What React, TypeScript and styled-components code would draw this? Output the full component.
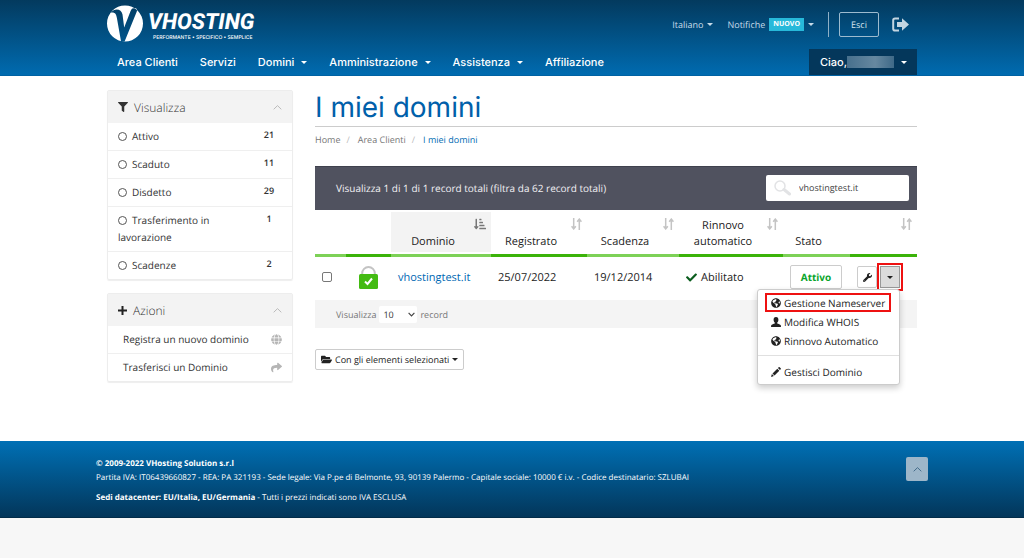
import React from "react";
import styled, { createGlobalStyle } from "styled-components";
import {
  FaCheck,
  FaFilter,
  FaFolderOpen,
  FaGlobe,
  FaGlobeAmericas,
  FaShare,
  FaSortAmountDownAlt,
  FaWrench,
} from "react-icons/fa";

const GlobalStyle = createGlobalStyle`
  * { box-sizing: border-box; }
  body {
    margin: 0;
    background: #f7f7f7;
    font-family: "Open Sans", "Noto Sans", sans-serif;
    font-size: 10px;
    color: #333;
    text-rendering: geometricPrecision;
  }
  a { color: inherit; text-decoration: none; }
  button, input, select { font-family: inherit; margin: 0; text-rendering: inherit; }
  button { cursor: pointer; }
  h1, h2, p, ul, ol { margin: 0; padding: 0; }
  ul, ol { list-style: none; }
  svg { display: block; flex: none; }
`;

const Container = styled.div`
  max-width: 810px;
  margin: 0 auto;
`;

/* ---------- header ---------- */

const Header = styled.header`
  background: linear-gradient(#033a5e, #006bb0);
  border-bottom: 1px solid #0062a3;
  color: #fff;
`;

const TopRow = styled.div`
  display: flex;
  justify-content: space-between;
  height: 49px;
`;

const Brand = styled.a`
  display: flex;
  align-items: flex-start;
  gap: 5px;
  padding-top: 5px;
`;

const BrandText = styled.span`
  display: flex;
  flex-direction: column;
  padding-top: 7px;
`;

const BrandName = styled.span`
  font: italic 800 22px/22px Roboto, sans-serif;
`;

const BrandTag = styled.span`
  font: 500 5px/8px Inter, sans-serif;
  padding-left: 5px;
`;

const Utilities = styled.div`
  display: flex;
  align-items: center;
  height: 49px;
  font-size: 9px;
  color: #c6dbe9;
`;

const UtilityButton = styled.button`
  display: flex;
  align-items: center;
  gap: 4px;
  margin-right: 14px;
  padding: 0;
  border: 0;
  background: none;
  color: inherit;
  font-size: 9px;
`;

const Badge = styled.span`
  padding: 0 4px;
  background: #27b9da;
  color: #fff;
  font: 700 7px/13px "Open Sans", sans-serif;
`;

const Separator = styled.span`
  width: 1px;
  height: 25px;
  margin-right: 10px;
  background: #8fb0c6;
`;

const ExitButton = styled.button`
  width: 40px;
  height: 25px;
  margin-right: 13px;
  border: 1px solid #9dbbcf;
  border-radius: 2px;
  background: none;
  color: #d5e4ee;
  font-size: 9px;
`;

const IconLink = styled.a`
  margin-right: 8px;
`;

const Caret = styled.span`
  width: 0;
  height: 0;
  border: 3px solid transparent;
  border-top-color: currentColor;
  border-bottom: 0;
`;

const NavRow = styled.nav`
  display: flex;
  justify-content: space-between;
  height: 26px;
  font: 500 11px/26px Inter, sans-serif;
`;

const NavList = styled.ul`
  display: flex;
  gap: 22px;
  padding-left: 10px;
`;

const NavLink = styled.a`
  display: flex;
  align-items: center;
  gap: 7px;
`;

const AccountButton = styled.button`
  display: flex;
  align-items: center;
  width: 108px;
  padding: 0 10px 0 11px;
  border: 0;
  background: #04375b;
  color: #fff;
  font: 500 11px/26px Inter, sans-serif;
`;

const HiddenName = styled.span`
  flex: 1;
  height: 12px;
  margin-right: 7px;
  background: linear-gradient(90deg, #47708d, #6688a0 60%, #3f6987);
`;

/* ---------- page ---------- */

const PageBody = styled.div`
  padding-bottom: 59px;
  background: #fff;
`;

const Columns = styled(Container)`
  display: grid;
  grid-template-columns: 186px minmax(0, 1fr);
  gap: 22px;
  padding-top: 14px;
`;

const Sidebar = styled.aside`
  display: flex;
  flex-direction: column;
  gap: 13px;
`;

const Panel = styled.section`
  border: 1px solid #ededed;
  border-radius: 2px;
  box-shadow: 0 1px 1px #eee;
`;

const PanelHeading = styled.h2`
  display: flex;
  align-items: center;
  gap: 6px;
  height: 32px;
  padding: 0 10px;
  background: #f3f3f3;
  font-size: 12px;
  font-weight: 300;
  color: #333;

  svg:last-child { color: #bbb; }
`;

const PanelTitle = styled.span`
  flex: 1;
`;

const PanelRow = styled.li`
  display: flex;
  justify-content: space-between;
  padding: 5px 10px;
  line-height: 17px;

  & + & { border-top: 1px solid #efefef; }
`;

const FilterLabel = styled.label`
  width: 124px;
`;

const Radio = styled.input`
  appearance: none;
  width: 9px;
  height: 9px;
  margin: 0 5px 0 0;
  border: 1px solid #555;
  border-radius: 50%;
  vertical-align: -1px;
`;

const Count = styled.span`
  width: 26px;
  font-size: 9px;
  font-weight: 600;
  line-height: 14px;
  text-align: center;
`;

const ActionLink = styled.a`
  display: flex;
  flex: 1;
  align-items: center;
  justify-content: space-between;
  padding-left: 5px;
  color: #333;

  svg { color: #b5b5b5; }
`;

const PageTitle = styled.h1`
  padding-bottom: 1px;
  border-bottom: 1px solid #ccc;
  color: #0060aa;
  font: 400 28px/35px Inter, sans-serif;
`;

const Breadcrumb = styled.ol`
  display: flex;
  padding-top: 6px;
  font-size: 9px;
  line-height: 13px;
  color: #777;

  li + li::before {
    content: "/";
    padding: 0 8px 0 6px;
    color: #bbb;
  }
`;

const Current = styled.li`
  color: #006bb3;
`;

const TableBar = styled.div`
  display: flex;
  align-items: center;
  justify-content: space-between;
  height: 44px;
  margin-top: 20px;
  padding: 0 8px 2px 21px;
  background: #50525f;
  border-top: 1px solid #3f414d;
  color: #f0f0f3;
`;

const SearchBox = styled.label`
  display: flex;
  align-items: center;
  gap: 8px;
  width: 143px;
  height: 26px;
  padding: 0 8px;
  border-radius: 2px;
  background: #fff;
`;

const SearchInput = styled.input`
  flex: 1;
  min-width: 0;
  padding: 0;
  border: 0;
  outline: 0;
  background: none;
  color: #444;
  font-size: 9px;
`;

const DomainTable = styled.table`
  width: 100%;
  table-layout: fixed;
  border-collapse: separate;
  border-spacing: 0;
  font-size: 11px;
  color: #222;
`;

const HeadCell = styled.th<{ $dark?: boolean }>`
  padding: 2px 0;
  border-bottom: 3px solid ${(p) => (p.$dark ? "#3bb309" : "#7dd157")};
  font-weight: 400;
`;

const HeadContent = styled.div<{ $sorted?: boolean }>`
  display: grid;
  grid-template-columns: 1fr 16px;
  height: 40px;
  padding: 6px 5px 2px 0;
  background: ${(p) => (p.$sorted ? "#f3f3f3" : "transparent")};

  svg { justify-self: end; }
`;

const HeadLabel = styled.span`
  align-self: end;
  padding-left: 5px;
  line-height: 16px;
  text-align: center;
`;

const BodyCell = styled.td`
  height: 43px;
  padding: 0 7px 3px;
  white-space: nowrap;
`;

const DomainLink = styled.a`
  color: #0068b3;
`;

const CheckBox = styled.input`
  appearance: none;
  display: block;
  width: 10px;
  height: 10px;
  border: 1px solid #777;
  border-radius: 2px;
`;

const Inline = styled.span<{ $center?: boolean }>`
  display: flex;
  align-items: center;
  justify-content: ${(p) => (p.$center ? "center" : "flex-start")};
  gap: 4px;
`;

const StatusButton = styled.button`
  width: 52px;
  height: 24px;
  padding: 0;
  border: 1px solid #ccc;
  border-radius: 2px;
  background: #fff;
  color: #0aa52c;
  font-size: 10px;
  font-weight: 700;
`;

const ActionGroup = styled.div`
  position: relative;
  display: flex;
  gap: 3px;
`;

const SquareButton = styled.button<{ $open?: boolean }>`
  display: flex;
  align-items: center;
  justify-content: center;
  width: 20px;
  height: 22px;
  padding: 0;
  border: 1px solid ${(p) => (p.$open ? "#999" : "#ccc")};
  border-radius: ${(p) => (p.$open ? "0" : "2px")};
  background: ${(p) => (p.$open ? "#dcdcdc" : "#fff")};
  outline: ${(p) => (p.$open ? "2px solid #ee1111" : "none")};
  outline-offset: 1px;
  color: #222;
`;

const Menu = styled.ul`
  position: absolute;
  top: 23px;
  right: 10px;
  z-index: 2;
  width: 143px;
  padding: 3px 7px;
  border: 1px solid #ccc;
  border-radius: 3px;
  background: #fff;
  box-shadow: 0 3px 6px rgba(0, 0, 0, 0.2);
  font-size: 10px;
`;

const MenuLink = styled.a<{ $marked?: boolean }>`
  display: flex;
  align-items: center;
  gap: 3px;
  width: 126px;
  height: 19px;
  padding: 0 4px;
  border: 2px solid ${(p) => (p.$marked ? "#ee1111" : "transparent")};
  color: #222;
`;

const MenuDivider = styled.li`
  height: 1px;
  margin: 5px -7px 6px;
  background: #e0e0e0;
`;

const TableFoot = styled.div`
  display: flex;
  align-items: center;
  gap: 3px;
  height: 28px;
  padding: 0 21px;
  background: #f4f4f4;
  color: #777;
  font-size: 9px;
`;

const SelectBox = styled.span`
  display: grid;
  align-items: center;

  > * { grid-area: 1 / 1; }
  svg { justify-self: end; margin-right: 2px; pointer-events: none; }
`;

const LengthSelect = styled.select`
  appearance: none;
  width: 38px;
  height: 17px;
  padding: 0 4px;
  border: 0;
  border-radius: 2px;
  background: #fff;
  color: #333;
  font-size: 9px;
`;

const BulkButton = styled.button`
  display: flex;
  align-items: center;
  gap: 3px;
  height: 21px;
  margin-top: 21px;
  padding: 0 5px;
  border: 1px solid #ccc;
  border-radius: 2px;
  background: #fff;
  color: #222;
  font-size: 9px;
`;

/* ---------- footer ---------- */

const Footer = styled.footer`
  background: linear-gradient(#0070b5, #03365a);
  border-bottom: 1px solid #022c49;
  color: #fff;
`;

const FooterInner = styled.div`
  display: flex;
  justify-content: space-between;
  align-items: flex-start;
  max-width: 832px;
  margin: 0 auto;
  padding: 16px 0 12px;
  font-size: 8px;
  line-height: 14px;
`;

const FooterText = styled.div`
  p + p + p { padding-top: 6px; }
`;

const TopLink = styled.a`
  display: flex;
  align-items: center;
  justify-content: center;
  width: 22px;
  height: 24px;
  border-radius: 2px;
  background: #9db6c9;
  color: #456d8b;
`;

/* ---------- drawings ---------- */

const LogoMark = () => (
  <svg width="36" height="37" viewBox="0 0 36 37" aria-hidden="true">
    <path
      fill="#fff"
      fillRule="evenodd"
      d="M18 .5A18 18 0 1 1 18 36.500 18 18 0 0 1 18 .5ZM3.800 7.500C8.500 7 9.200 9.200 9.900 13L14 36.200H17.700L29.800 6.500C30.600 4.300 29.500 3 27.500 3 25.300 3 24.300 4 23.400 6.500L17.200 22.500 15.500 9.500C14.700 4 8 2.500 3.800 7.500Z"
    />
  </svg>
);

const LogoutIcon = () => (
  <svg width="17" height="15" viewBox="0 0 17 15" aria-hidden="true">
    <path d="M7 1.500H3Q1.200 1.500 1.200 3.300V11.700Q1.200 13.500 3 13.500H7" fill="none" stroke="#c3d5e1" strokeWidth="2" />
    <path d="M5 5H10V1.300L17 7.500 10 13.700V10H5Z" fill="#c3d5e1" />
  </svg>
);

const ChevronUp = () => (
  <svg width="9" height="9" viewBox="0 0 9 9" fill="none" stroke="currentColor" aria-hidden="true">
    <path d="M.7 6.300 4.500 2.600 8.300 6.300" />
  </svg>
);

const ChevronDown = () => (
  <svg width="7" height="5" viewBox="0 0 7 5" fill="none" stroke="#444" strokeWidth="1.200" aria-hidden="true">
    <path d="M.6.900 3.500 3.800 6.400.900" />
  </svg>
);

const PlusIcon = () => (
  <svg width="9" height="9" viewBox="0 0 9 9" stroke="#222" strokeWidth="2" aria-hidden="true">
    <path d="M4.500 0V9M0 4.500H9" />
  </svg>
);

const SortIcon = () => (
  <svg width="11" height="12" viewBox="0 0 11 12" fill="none" stroke="#c4c4c4" strokeWidth="1.500" aria-hidden="true">
    <path d="M2.700 0V10.500M.6 8.200 2.700 10.900 4.800 8.200M8.300 12V1.500M6.200 3.800 8.300 1.100 10.400 3.800" />
  </svg>
);

const SearchIcon = () => (
  <svg width="17" height="16" viewBox="0 0 17 16" fill="none" stroke="#e2e3e5" aria-hidden="true">
    <circle cx="6" cy="6" r="5" strokeWidth="1.500" />
    <path d="M10 9.500 15.500 14" strokeWidth="3" strokeLinecap="round" />
  </svg>
);

const LockIcon = () => (
  <svg width="19" height="23" viewBox="0 0 19 23" aria-hidden="true">
    <path d="M3.200 10V7.300a6.300 6.300 0 0 1 12.600 0V10" fill="none" stroke="#c3c3c3" strokeWidth="2" />
    <rect x="0" y="8" width="19" height="15" rx="1.500" fill="#43bb12" />
    <path d="M6 15.500 8.500 18 13 12.500" fill="none" stroke="#fff" strokeWidth="2" />
  </svg>
);

const UserIcon = () => (
  <svg width="10" height="10" viewBox="0 0 10 10" fill="#222" aria-hidden="true">
    <path d="M5 0C6.700 0 7.500 1.200 7.400 2.900 7.300 4.300 6.700 5.100 6.200 5.600V6.500C7.200 7 9.400 7.300 9.800 8.300L10 10H0L.2 8.300C.6 7.300 2.800 7 3.800 6.500V5.600C3.300 5.100 2.700 4.300 2.600 2.900 2.500 1.200 3.300 0 5 0Z" />
  </svg>
);

const PencilIcon = () => (
  <svg width="10" height="10" viewBox="0 0 10 10" fill="#222" aria-hidden="true">
    <path d="M0 10 .9 7.100 2.900 9.100ZM1.500 6.500 6.300 1.700 8.300 3.700 3.500 8.500ZM6.900 1.100 7.700.3Q8.200-.1 8.700.3L9.700 1.300Q10.100 1.800 9.700 2.300L8.900 3.100Z" />
  </svg>
);

/* ---------- data ---------- */

const navItems = [
  { label: "Area Clienti" },
  { label: "Servizi" },
  { label: "Domini", menu: true },
  { label: "Amministrazione", menu: true },
  { label: "Assistenza", menu: true },
  { label: "Affiliazione" },
];

const filters = [
  ["Attivo", 21],
  ["Scaduto", 11],
  ["Disdetto", 29],
  ["Trasferimento in lavorazione", 1],
  ["Scadenze", 2],
] as const;

const columns = [
  { width: 31 },
  { width: 45 },
  { width: 100, label: "Dominio", sorted: true },
  { width: 96, label: "Registrato", sortable: true },
  { width: 92, label: "Scadenza", sortable: true },
  { width: 104, label: "Rinnovo automatico", sortable: true },
  { width: 67, label: "Stato" },
  { width: 67, sortable: true },
];

export default function App() {
  return (
    <>
      <GlobalStyle />
      <Header>
        <Container>
          <TopRow>
            <Brand href="#">
              <LogoMark />
              <BrandText>
                <BrandName>VHOSTING</BrandName>
                <BrandTag>PERFORMANTE • SPECIFICO • SEMPLICE</BrandTag>
              </BrandText>
            </Brand>
            <Utilities>
              <UtilityButton>
                Italiano <Caret />
              </UtilityButton>
              <UtilityButton>
                Notifiche <Badge>NUOVO</Badge> <Caret />
              </UtilityButton>
              <Separator />
              <ExitButton>Esci</ExitButton>
              <IconLink href="#" aria-label="Esci">
                <LogoutIcon />
              </IconLink>
            </Utilities>
          </TopRow>
          <NavRow>
            <NavList>
              {navItems.map((item) => (
                <li key={item.label}>
                  <NavLink href="#">
                    {item.label}
                    {item.menu && <Caret />}
                  </NavLink>
                </li>
              ))}
            </NavList>
            <AccountButton>
              Ciao,
              <HiddenName />
              <Caret />
            </AccountButton>
          </NavRow>
        </Container>
      </Header>

      <PageBody>
        <Columns>
          <Sidebar>
            <Panel>
              <PanelHeading>
                <FaFilter size={10} />
                <PanelTitle>Visualizza</PanelTitle>
                <ChevronUp />
              </PanelHeading>
              <ul>
                {filters.map(([label, count]) => (
                  <PanelRow key={label}>
                    <FilterLabel>
                      <Radio type="radio" name="status" />
                      {label}
                    </FilterLabel>
                    <Count>{count}</Count>
                  </PanelRow>
                ))}
              </ul>
            </Panel>
            <Panel>
              <PanelHeading>
                <PlusIcon />
                <PanelTitle>Azioni</PanelTitle>
                <ChevronUp />
              </PanelHeading>
              <ul>
                <PanelRow>
                  <ActionLink href="#">
                    Registra un nuovo dominio <FaGlobe size={11} />
                  </ActionLink>
                </PanelRow>
                <PanelRow>
                  <ActionLink href="#">
                    Trasferisci un Dominio <FaShare size={11} />
                  </ActionLink>
                </PanelRow>
              </ul>
            </Panel>
          </Sidebar>

          <main>
            <PageTitle>I miei domini</PageTitle>
            <Breadcrumb>
              <li>
                <a href="#">Home</a>
              </li>
              <li>
                <a href="#">Area Clienti</a>
              </li>
              <Current>I miei domini</Current>
            </Breadcrumb>

            <TableBar>
              <span>Visualizza 1 di 1 di 1 record totali (filtra da 62 record totali)</span>
              <SearchBox>
                <SearchIcon />
                <SearchInput type="text" aria-label="Cerca" defaultValue="vhostingtest.it" />
              </SearchBox>
            </TableBar>

            <DomainTable>
              <colgroup>
                {columns.map((column, i) => (
                  <col key={i} width={column.width} />
                ))}
              </colgroup>
              <thead>
                <tr>
                  {columns.map((column, i) => (
                    <HeadCell key={i} $dark={i % 2 === 1}>
                      <HeadContent $sorted={column.sorted}>
                        <HeadLabel>{column.label}</HeadLabel>
                        {column.sorted && <FaSortAmountDownAlt size={12} color="#777" />}
                        {column.sortable && <SortIcon />}
                      </HeadContent>
                    </HeadCell>
                  ))}
                </tr>
              </thead>
              <tbody>
                <tr>
                  <BodyCell>
                    <CheckBox type="checkbox" aria-label="Seleziona vhostingtest.it" />
                  </BodyCell>
                  <BodyCell>
                    <Inline $center>
                      <LockIcon />
                    </Inline>
                  </BodyCell>
                  <BodyCell>
                    <DomainLink href="#">vhostingtest.it</DomainLink>
                  </BodyCell>
                  <BodyCell>25/07/2022</BodyCell>
                  <BodyCell>19/12/2014</BodyCell>
                  <BodyCell>
                    <Inline>
                      <FaCheck size={11} color="#0b5d1e" />
                      Abilitato
                    </Inline>
                  </BodyCell>
                  <BodyCell>
                    <StatusButton>Attivo</StatusButton>
                  </BodyCell>
                  <BodyCell>
                    <ActionGroup>
                      <SquareButton aria-label="Gestisci">
                        <FaWrench size={9} />
                      </SquareButton>
                      <SquareButton $open aria-label="Altre azioni" aria-expanded="true">
                        <Caret />
                      </SquareButton>
                      <Menu>
                        <li>
                          <MenuLink href="#" $marked>
                            <FaGlobeAmericas size={10} /> Gestione Nameserver
                          </MenuLink>
                        </li>
                        <li>
                          <MenuLink href="#">
                            <UserIcon /> Modifica WHOIS
                          </MenuLink>
                        </li>
                        <li>
                          <MenuLink href="#">
                            <FaGlobeAmericas size={10} /> Rinnovo Automatico
                          </MenuLink>
                        </li>
                        <MenuDivider role="separator" />
                        <li>
                          <MenuLink href="#">
                            <PencilIcon /> Gestisci Dominio
                          </MenuLink>
                        </li>
                      </Menu>
                    </ActionGroup>
                  </BodyCell>
                </tr>
              </tbody>
            </DomainTable>
            <TableFoot>
              <label htmlFor="length">Visualizza</label>
              <SelectBox>
                <LengthSelect id="length" defaultValue="10">
                  <option>10</option>
                  <option>25</option>
                  <option>50</option>
                </LengthSelect>
                <ChevronDown />
              </SelectBox>
              record
            </TableFoot>
            <BulkButton>
              <FaFolderOpen size={11} />
              Con gli elementi selezionati
              <Caret />
            </BulkButton>
          </main>
        </Columns>
      </PageBody>

      <Footer>
        <FooterInner>
          <FooterText>
            <p>
              <strong>© 2009-2022 VHosting Solution s.r.l</strong>
            </p>
            <p>
              Partita IVA: IT06439660827 - REA: PA 321193 - Sede legale: Via P.pe di Belmonte, 93, 90139 Palermo -
              Capitale sociale: 10000 € i.v. - Codice destinatario: SZLUBAI
            </p>
            <p>
              <strong>Sedi datacenter: EU/Italia, EU/Germania</strong> - Tutti i prezzi indicati sono IVA ESCLUSA
            </p>
          </FooterText>
          <TopLink href="#" aria-label="Torna su">
            <ChevronUp />
          </TopLink>
        </FooterInner>
      </Footer>
    </>
  );
}
